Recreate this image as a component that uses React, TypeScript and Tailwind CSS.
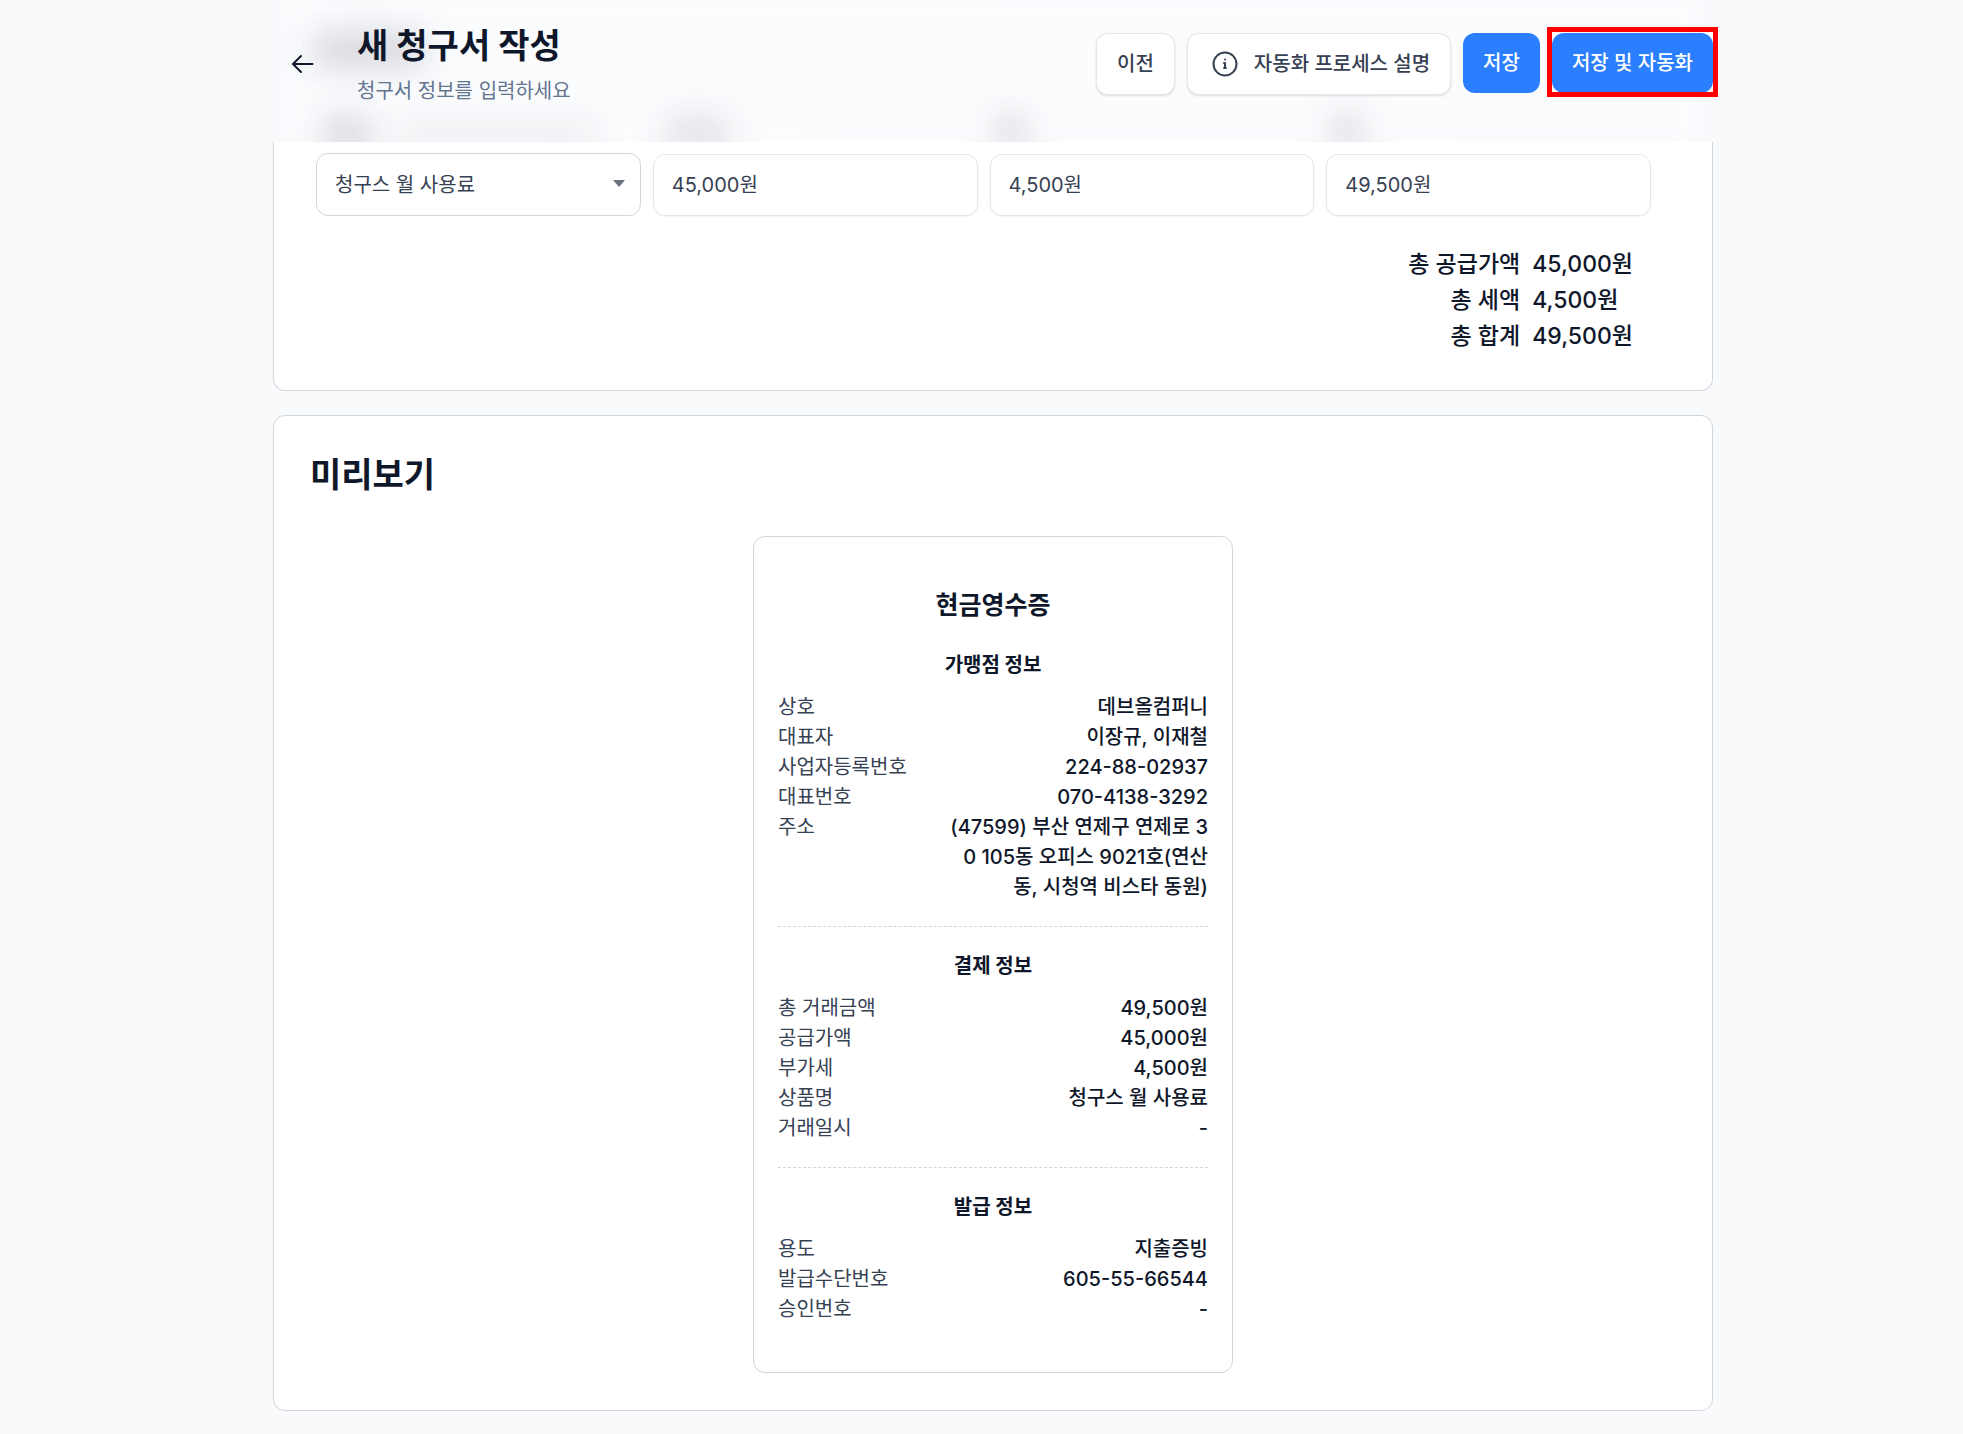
const infoRows = {
  store: [
    ["상호", "데브올컴퍼니"],
    ["대표자", "이장규, 이재철"],
    ["사업자등록번호", "224-88-02937"],
    ["대표번호", "070-4138-3292"],
    ["주소", "(47599) 부산 연제구 연제로 30 105동 오피스 9021호(연산동, 시청역 비스타 동원)"],
  ],
  payment: [
    ["총 거래금액", "49,500원"],
    ["공급가액", "45,000원"],
    ["부가세", "4,500원"],
    ["상품명", "청구스 월 사용료"],
    ["거래일시", "-"],
  ],
  issue: [
    ["용도", "지출증빙"],
    ["발급수단번호", "605-55-66544"],
    ["승인번호", "-"],
  ],
};

function Section({ title, rows, divided = false }: { title: string; rows: string[][]; divided?: boolean }) {
  return (
    <section className={divided ? "mt-6 border-t border-dashed border-gray-300 pt-6" : "mt-[26px]"}>
      <h4 className="mb-3 text-center text-[20px] leading-[30px] font-bold">{title}</h4>
      <dl>
        {rows.map(([label, value]) => (
          <div key={label} className="flex justify-between gap-4">
            <dt className="shrink-0 text-gray-700">{label}</dt>
            <dd className="max-w-[60%] text-right font-medium break-all">{value}</dd>
          </div>
        ))}
      </dl>
    </section>
  );
}

function AmountInput({ label, value }: { label: string; value: string }) {
  return (
    <input
      aria-label={label}
      defaultValue={value}
      className="h-[62px] w-full min-w-0 rounded-xl border border-gray-200 bg-white px-[18px] pb-1 text-[20px] text-gray-700 shadow-xs outline-none"
    />
  );
}

export default function App() {
  return (
    <div className="min-h-screen bg-[#f9fafc] pl-[23px] font-['Inter','Noto_Sans_CJK_KR',sans-serif] text-[20px] leading-[30px] text-[#0f172a]">
      <div className="mx-auto max-w-[1440px]">
        <header className="relative flex h-[142px] items-start justify-between">
          <div aria-hidden="true" className="absolute inset-0 overflow-hidden bg-linear-to-r from-[#f9fafc] via-[#fbfcfe] to-[#f9fafc] via-10%">
            <div className="absolute inset-x-4 inset-y-0 bg-[#fbfcfe] blur-[8px]" />
            <div className="absolute top-[30px] left-[36px] h-10 w-30 rounded-full bg-slate-900/14 blur-[16px]" />
            <div className="absolute top-[114px] left-[46px] h-10 w-14 rounded-full bg-slate-900/14 blur-[16px]" />
            <div className="absolute top-[118px] left-[120px] h-10 w-52 rounded-full bg-slate-900/5 blur-[16px]" />
            <div className="absolute top-[114px] left-[388px] h-10 w-18 rounded-full bg-slate-900/10 blur-[16px]" />
            <div className="absolute top-[112px] left-[718px] h-10 w-10 rounded-full bg-slate-900/12 blur-[16px]" />
            <div className="absolute top-[112px] left-[1054px] h-10 w-10 rounded-full bg-slate-900/12 blur-[16px]" />
          </div>
          <div className="relative flex pt-5">
            <button type="button" aria-label="뒤로" className="mt-[29px] ml-[17px] h-[30px] w-[30px]">
              <svg viewBox="0 0 30 30" className="h-[30px] w-[30px]" fill="none" stroke="currentColor" strokeWidth="2" strokeLinecap="round" strokeLinejoin="round">
                <path d="M22.5 15H3M11 7 3 15l8 8" />
              </svg>
            </button>
            <div className="ml-[37px] pt-px">
              <h1 className="text-[34px] leading-[50px] font-bold">새 청구서 작성</h1>
              <p className="mt-[5px] text-slate-500">청구서 정보를 입력하세요</p>
            </div>
          </div>
          <div className="relative flex gap-3 pt-[33px] font-medium">
            <button type="button" className="h-[62px] rounded-xl border border-gray-200 bg-white px-5 text-gray-700 shadow-sm">이전</button>
            <button type="button" className="flex h-[62px] items-center gap-4 rounded-xl border border-gray-200 bg-white pr-5 pl-6 text-gray-700 shadow-sm">
              <svg viewBox="0 0 26 26" className="h-[26px] w-[26px]" fill="none" stroke="currentColor" strokeWidth="2" strokeLinecap="round" strokeLinejoin="round">
                <circle cx="13" cy="13" r="11.5" />
                <path d="M12 12h1v5M12 17h2M13 8.5v.1" />
              </svg>
              자동화 프로세스 설명
            </button>
            <button type="button" className="h-[60px] rounded-xl bg-[#2b7fff] px-5 text-white">저장</button>
            <div className="relative h-[60px]">
              <button type="button" className="h-[60px] rounded-xl bg-[#2b7fff] px-5 text-white">저장 및 자동화</button>
              <span aria-hidden="true" className="pointer-events-none absolute -inset-x-[5px] -top-[6px] -bottom-1 border-5 border-[#ff0000]" />
            </div>
          </div>
        </header>

        <main className="space-y-6">
          <section className="rounded-b-xl border border-t-0 border-gray-300 bg-white px-[42px] pt-[11px] pb-9">
            <div className="mr-[19px] grid grid-cols-4 items-end gap-3">
              <div className="relative">
                <select aria-label="품목" className="block h-[63px] w-full appearance-none rounded-xl border border-gray-300 bg-white px-[18px] text-gray-700 outline-none">
                  <option>청구스 월 사용료</option>
                </select>
                <svg viewBox="0 0 12 7" className="pointer-events-none absolute top-[27px] right-4 h-[7px] w-3 fill-gray-500"><path d="M0 0h12L6 7z" /></svg>
              </div>
              <AmountInput label="공급가액" value="45,000원" />
              <AmountInput label="세액" value="4,500원" />
              <AmountInput label="합계" value="49,500원" />
            </div>
            <dl className="mt-[30px] mr-[37px] ml-auto grid w-fit grid-cols-[auto_auto] gap-x-3 text-[23px] leading-9 font-medium">
              <dt className="text-right">총 공급가액</dt>
              <dd>45,000원</dd>
              <dt className="text-right">총 세액</dt>
              <dd>4,500원</dd>
              <dt className="text-right">총 합계</dt>
              <dd>49,500원</dd>
            </dl>
          </section>

          <section className="rounded-xl border border-gray-300 bg-white px-9 pt-[34px] pb-[37px]">
            <h2 className="text-[34px] leading-[50px] font-semibold">미리보기</h2>
            <article className="mx-auto mt-9 max-w-[480px] rounded-xl border border-gray-300 px-6 pt-[49px] pb-12">
              <h3 className="text-center text-[25px] leading-[38px] font-bold">현금영수증</h3>
              <Section title="가맹점 정보" rows={infoRows.store} />
              <Section title="결제 정보" rows={infoRows.payment} divided />
              <Section title="발급 정보" rows={infoRows.issue} divided />
            </article>
          </section>
        </main>
      </div>
    </div>
  );
}
